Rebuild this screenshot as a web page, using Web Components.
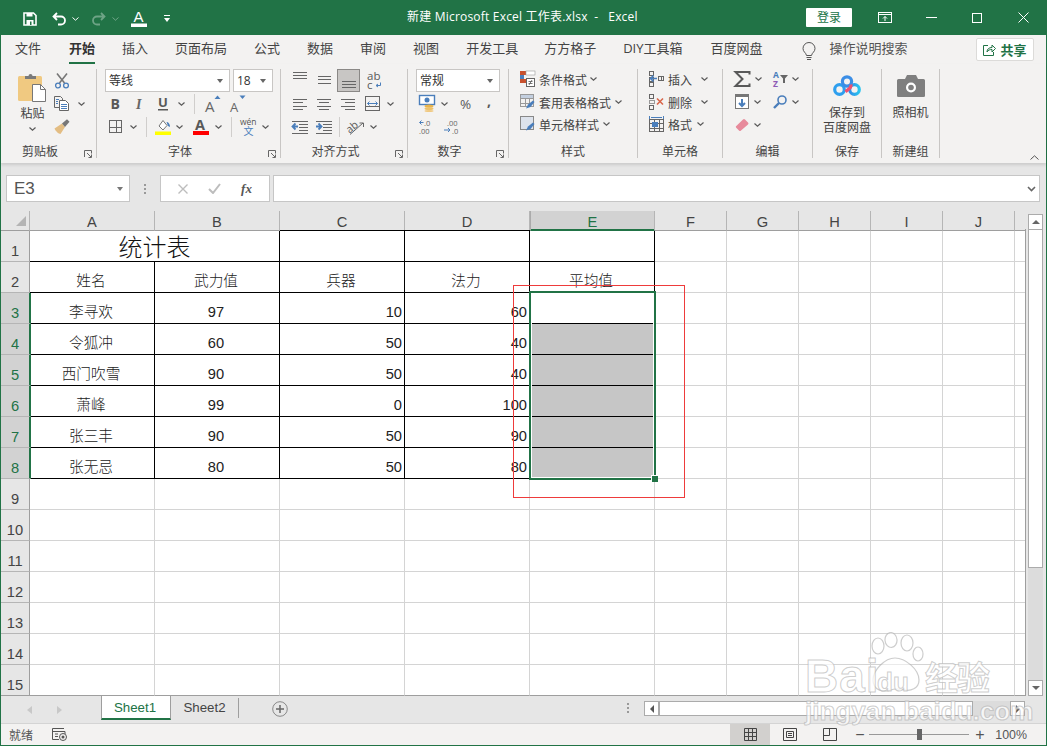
<!DOCTYPE html>
<html lang="zh">
<head>
<meta charset="utf-8">
<title>新建 Microsoft Excel 工作表.xlsx - Excel</title>
<style>
  html, body { margin: 0; padding: 0; }
  body { width: 1047px; height: 746px; overflow: hidden; background: #217346; color: #444;
    font-family: "Open Sans", "Noto Sans CJK SC", sans-serif; font-size: 12px; }
</style>
</head>
<body>
<x-app>
  <x-titlebar></x-titlebar>
  <x-tabs></x-tabs>
  <x-ribbon>
    <rib-group label="剪贴板" width="96" launcher>
      <rib-big icon="paste" width="29" style="margin-left:17px" caret>粘贴</rib-big>
      <div style="margin-left:7px">
        <rib-row><x-ic n="cut" style="margin-left:1px"></x-ic></rib-row>
        <rib-row><x-ic n="copy"></x-ic><x-ic n="caret" style="margin-left:9px"></x-ic></rib-row>
        <rib-row><x-ic n="brush"></x-ic></rib-row>
      </div>
    </rib-group>
    <rib-group label="字体" width="184" launcher>
      <div>
        <rib-row><rib-combo width="125" style="margin-left:8px">等线</rib-combo><rib-combo width="40" style="margin-left:3px">18</rib-combo></rib-row>
        <rib-row>
          <x-ic n="bold" style="margin-left:12px"></x-ic><x-ic n="italic" style="margin-left:12px"></x-ic><x-ic n="under" style="margin-left:12px"></x-ic>
          <x-ic n="caret" style="margin-left:9px"></x-ic><x-ic n="sep" style="margin-left:9px"></x-ic>
          <x-ic n="grow" style="margin-left:10px"></x-ic><x-ic n="shrink" style="margin-left:9px"></x-ic>
        </rib-row>
        <rib-row>
          <x-ic n="borders" style="margin-left:12px"></x-ic><x-ic n="caret" style="margin-left:8px"></x-ic><x-ic n="sep" style="margin-left:9px"></x-ic>
          <x-ic n="fill" style="margin-left:8px"></x-ic><x-ic n="caret" style="margin-left:5px"></x-ic>
          <x-ic n="fontcolor" style="margin-left:10px"></x-ic><x-ic n="caret" style="margin-left:6px"></x-ic><x-ic n="sep" style="margin-left:9px"></x-ic>
          <x-ic n="wen" style="margin-left:8px"></x-ic><x-ic n="caret" style="margin-left:5px"></x-ic>
        </rib-row>
      </div>
    </rib-group>
    <rib-group label="对齐方式" width="127" launcher>
      <div>
        <rib-row>
          <x-ic n="atop" style="margin-left:12px"></x-ic><x-ic n="amid" style="margin-left:10px"></x-ic>
          <x-ic n="abot" active style="margin-left:6px"></x-ic><x-ic n="wrap" style="margin-left:7px"></x-ic>
        </rib-row>
        <rib-row>
          <x-ic n="aleft" style="margin-left:12px"></x-ic><x-ic n="acenter" style="margin-left:10px"></x-ic><x-ic n="aright" style="margin-left:10px"></x-ic>
          <x-ic n="merge" style="margin-left:10px"></x-ic><x-ic n="caret" style="margin-left:7px"></x-ic>
        </rib-row>
        <rib-row>
          <x-ic n="outdent" style="margin-left:11px"></x-ic><x-ic n="indent" style="margin-left:8px"></x-ic><x-ic n="sep" style="margin-left:7px"></x-ic>
          <x-ic n="orient" style="margin-left:7px"></x-ic><x-ic n="caret" style="margin-left:5px"></x-ic>
        </rib-row>
      </div>
    </rib-group>
    <rib-group label="数字" width="101" launcher>
      <div>
        <rib-row><rib-combo width="84" style="margin-left:8px">常规</rib-combo></rib-row>
        <rib-row>
          <x-ic n="money" style="margin-left:11px"></x-ic><x-ic n="caret" style="margin-left:6px"></x-ic>
          <x-ic n="pct" style="margin-left:12px"></x-ic><x-ic n="comma" style="margin-left:14px"></x-ic>
        </rib-row>
        <rib-row><x-ic n="decinc" style="margin-left:11px"></x-ic><x-ic n="decdec" style="margin-left:11px"></x-ic></rib-row>
      </div>
    </rib-group>
    <rib-group label="样式" width="129">
      <div style="--row:22.5px;margin-top:-1px">
        <rib-row><x-ic n="cond" style="margin-left:11px"></x-ic><span style="margin-left:4px">条件格式</span><x-ic n="caret" style="margin-left:3px"></x-ic></rib-row>
        <rib-row><x-ic n="tablefmt" style="margin-left:11px"></x-ic><span style="margin-left:4px">套用表格格式</span><x-ic n="caret" style="margin-left:4px"></x-ic></rib-row>
        <rib-row><x-ic n="cellstyle" style="margin-left:11px"></x-ic><span style="margin-left:4px">单元格样式</span><x-ic n="caret" style="margin-left:4px"></x-ic></rib-row>
      </div>
    </rib-group>
    <rib-group label="单元格" width="85">
      <div style="--row:22.5px;margin-top:-1px">
        <rib-row><x-ic n="insert" style="margin-left:11px"></x-ic><span style="margin-left:4px">插入</span><x-ic n="caret" style="margin-left:9px"></x-ic></rib-row>
        <rib-row><x-ic n="delete" style="margin-left:11px"></x-ic><span style="margin-left:4px">删除</span><x-ic n="caret" style="margin-left:9px"></x-ic></rib-row>
        <rib-row><x-ic n="format" style="margin-left:11px"></x-ic><span style="margin-left:4px">格式</span><x-ic n="caret" style="margin-left:5px"></x-ic></rib-row>
      </div>
    </rib-group>
    <rib-group label="编辑" width="90">
      <div style="margin-top:-2px">
        <rib-row><x-ic n="sum" style="margin-left:11px"></x-ic><x-ic n="caret" style="margin-left:5px"></x-ic><x-ic n="sort" style="margin-left:11px"></x-ic><x-ic n="caret" style="margin-left:4px"></x-ic></rib-row>
        <rib-row><x-ic n="filldown" style="margin-left:12px"></x-ic><x-ic n="caret" style="margin-left:5px"></x-ic><x-ic n="find" style="margin-left:12px"></x-ic><x-ic n="caret" style="margin-left:5px"></x-ic></rib-row>
        <rib-row><x-ic n="eraser" style="margin-left:12px"></x-ic><x-ic n="caret" style="margin-left:5px"></x-ic></rib-row>
      </div>
    </rib-group>
    <rib-group label="保存" width="69">
      <rib-big icon="baidu" width="68">保存到<br>百度网盘</rib-big>
    </rib-group>
    <rib-group label="新建组" width="58">
      <rib-big icon="camera" width="57">照相机</rib-big>
    </rib-group>
  </x-ribbon>
  <x-formula></x-formula>
  <x-main>
    <x-sheet></x-sheet>
    <x-vscroll></x-vscroll>
  </x-main>
  <x-sheetbar></x-sheetbar>
  <x-status></x-status>
  <x-watermark></x-watermark>
</x-app>

<script>
const CJK = '"Noto Sans CJK SC"';
const G = '#666', B = '#4a7ebb', K = '#595959';
const line = (x1, y1, x2, y2, c = G, w = 1) => `<path d="M${x1} ${y1}L${x2} ${y2}" stroke="${c}" stroke-width="${w}" fill="none"/>`;
const hlines = (rows, c = G) => rows.map(r => line(r[0], r[2] + .5, r[1], r[2] + .5, c)).join('');
const txt = (x, y, s, size, c = G, extra = '') => `<text x="${x}" y="${y}" font-size="${size}" fill="${c}" font-family="Liberation Sans,${CJK},sans-serif" ${extra}>${s}</text>`;
const grid = (x, y, w, h, cols, rows, c = G) => {
  let o = `<rect x="${x + .5}" y="${y + .5}" width="${w - 1}" height="${h - 1}" fill="none" stroke="${c}"/>`;
  for (let i = 1; i < cols; i++) { const px = Math.round(x + i * w / cols) + .5; o += line(px, y, px, y + h, c); }
  for (let i = 1; i < rows; i++) { const py = Math.round(y + i * h / rows) + .5; o += line(x, py, x + w, py, c); }
  return o;
};
const ICONS = {
  caret: [7, 4, `<path d="M.5 .5L3.5 3.2L6.5 .5" fill="none" stroke="#595959" stroke-width="1.2"/>`],
  sep: [1, 20, `<rect width="1" height="20" fill="#d0cecc"/>`],
  paste: [29, 29, `<rect x="0" y="3" width="24" height="25" rx="1.5" fill="#f0c981"/><path d="M7 5V3h3.5a2 2 0 0 1 4 0H18v3H7z" fill="#7a7a7a"/><path d="M14.5 11.5h8l5 5v12h-13z" fill="#fff" stroke="#777"/><path d="M22.5 11.5v5h5" fill="none" stroke="#777"/>`],
  cut: [14, 16, `<path d="M2 .5L9.5 10M12 .5L4.5 10" stroke="#777" stroke-width="1.6" fill="none"/><circle cx="3" cy="12.5" r="2.4" fill="none" stroke="${B}" stroke-width="1.3"/><circle cx="11" cy="12.5" r="2.4" fill="none" stroke="${B}" stroke-width="1.3"/>`],
  copy: [15, 15, `<path d="M.5 .5h6l2 2v9H.5z" fill="#f3f2f1" stroke="#666"/><path d="M5.5 4.5h6l3 3v7h-9z" fill="#fff" stroke="#666"/>${hlines([[2, 5, 3], [2, 4, 5], [2, 4, 7]], B)}${hlines([[7, 13, 8], [7, 13, 10], [7, 13, 12]], B)}`],
  brush: [16, 15, `<path d="M.5 9.5L8 4.5l3 3.5-4.5 7c-2 0-5-3-6-5.5z" fill="#e3bd83"/><path d="M8 4.5l5-4.3 2.5 2.5L11 8z" fill="#777"/>`],
  bold: [12, 14, txt(1.5, 12, 'B', 14, K, 'font-weight="700"')],
  italic: [12, 14, `<text x="3" y="12" font-size="14" fill="#666" font-style="italic" font-family="Liberation Serif,serif" font-weight="700">I</text>`],
  under: [12, 16, txt(1, 11, 'U', 13, K, 'font-weight="700"') + `<rect x="1" y="13" width="10" height="1.5" fill="${K}"/>`],
  grow: [16, 18, txt(0, 17, 'A', 15, G) + `<path d="M9.5 4L12.5 .5L15.5 4z" fill="${B}"/>`],
  shrink: [16, 18, txt(0, 17, 'A', 13, G) + `<path d="M9.5 .5L12.5 4L15.5 .5z" fill="${B}"/>`],
  borders: [13, 13, grid(0, 0, 13, 13, 2, 2, '#666')],
  fill: [16, 16, `<path d="M4 7L8 1.5L12 6.5L8 11z" fill="#fff" stroke="#777"/><path d="M11.5 3c2 0 3.5 2 3.5 5l-2-1z" fill="${B}"/><rect y="12.5" width="16" height="3.5" fill="#ffff00"/>`],
  fontcolor: [16, 17, txt(2, 12, 'A', 14.5, K, 'font-weight="700"') + `<rect y="13" width="16" height="4" fill="#ff0000"/>`],
  wen: [17, 17, txt(0, 7, 'wén', 8.5, '#555') + `<text x="3.500" y="17" font-size="10" fill="${B}" font-family="${CJK},sans-serif">文</text>`],
  atop: [14, 14, hlines([[0, 14, -2], [0, 14, 1], [0, 14, 4]])],
  amid: [14, 14, hlines([[1, 14, 2], [1, 14, 5], [1, 14, 9]])],
  abot: [14, 14, hlines([[0, 14, 7], [0, 14, 10], [0, 14, 13]])],
  wrap: [15, 17, txt(0, 8, 'ab', 11.5, K) + txt(0, 17, 'c', 11.5, K) + `<path d="M13.5 10.5v3h-4M11 12l-2 1.5 2 1.5" fill="none" stroke="${B}"/>`],
  aleft: [14, 14, hlines([[0, 14, 2], [0, 10, 5], [0, 14, 9], [0, 10, 12]])],
  acenter: [14, 14, hlines([[0, 14, 2], [2, 12, 5], [0, 14, 9], [2, 12, 12]])],
  aright: [14, 14, hlines([[0, 14, 2], [4, 14, 5], [0, 14, 9], [4, 14, 12]])],
  merge: [15, 15, grid(0, 0, 15, 15, 1, 3) + `<rect x="1" y="5" width="13" height="5" fill="#f3f2f1"/><path d="M2.5 7.5h10M4.5 5.5l-2 2 2 2M10.5 5.5l2 2-2 2" fill="none" stroke="${B}"/>`],
  outdent: [16, 14, hlines([[0, 16, 1], [7, 16, 4], [7, 16, 7], [7, 16, 10], [0, 16, 13]]) + `<path d="M6 6.5H1M3.5 3.5l-3 3 3 3" fill="none" stroke="${B}" stroke-width="1.8"/>`],
  indent: [16, 14, hlines([[0, 16, 1], [7, 16, 4], [7, 16, 7], [7, 16, 10], [0, 16, 13]]) + `<path d="M0 6.5h5M2.5 3.5l3 3-3 3" fill="none" stroke="${B}" stroke-width="1.8"/>`],
  orient: [18, 16, txt(0, 12, 'ab', 10.5, K, 'transform="rotate(-40 5 10)"') + `<path d="M3 15.5L16 4M12.5 4H16.5V8" fill="none" stroke="#666"/>`],
  money: [16, 17, `<rect x=".5" y=".5" width="15" height="9" fill="#fff" stroke="${B}" stroke-width="1.4"/><circle cx="8" cy="5" r="2.5" fill="${B}"/><ellipse cx="10" cy="11" rx="4.5" ry="1.6" fill="#e9b44c"/><ellipse cx="10" cy="13.5" rx="4.5" ry="1.6" fill="#eec26a"/><ellipse cx="10" cy="16" rx="4.5" ry="1" fill="#f0c981"/>`],
  pct: [13, 14, txt(0, 12, '%', 13.5, K)],
  comma: [6, 14, txt(0, 9, ',', 14, K, 'font-weight="700"')],
  decinc: [14, 15, txt(5, 7, '.0', 7.5, '#666') + txt(0, 14.5, '.00', 7.5, '#666') + `<path d="M4.5 3.5H.8M2.5 1.5l-2 2 2 2" fill="none" stroke="${B}"/>`],
  decdec: [14, 15, txt(3, 6.5, '.00', 7.5, '#666') + txt(8, 14.5, '.0', 7.5, '#666') + `<path d="M0 11h6M4 9l2 2-2 2" fill="none" stroke="${B}"/>`],
  cond: [15, 16, `<rect width="6" height="4" fill="#c8512e"/><rect x="6" width="9" height="4" fill="#fff" stroke="#999" stroke-width=".6"/><rect y="4" width="4" height="8" fill="#4a7ebb"/><rect y="8" width="6" height="4" fill="#c8512e"/><rect x="6.5" y="7.5" width="8" height="8" fill="#fff" stroke="#666"/><path d="M8.5 10.5h4M8.5 12.5h4M12 9l-3 5" stroke="#555" fill="none" stroke-width=".8"/>`],
  tablefmt: [15, 16, grid(0, 0, 14, 13, 3, 3, '#999') + `<rect x="1" y="1" width="12" height="3" fill="#c3cfdf"/><path d="M6 14.5l2-4 5-4 1.5 1.5-4 5z" fill="${B}"/>`],
  cellstyle: [15, 16, `<rect x=".5" y=".5" width="13" height="13" fill="#dde3ec" stroke="#888"/><path d="M6 14.5l2-4 5-4 1.5 1.5-4 5z" fill="${B}"/>`],
  insert: [15, 16, grid(0, 0, 5, 5, 1, 1, '#666') + grid(0, 6, 5, 5, 1, 1, '#666') + grid(0, 11, 5, 5, 1, 1, '#666') + grid(9, 5, 6, 5, 2, 1, '#666') + `<path d="M8 7.5H2M4.5 4.5l-3 3 3 3" fill="none" stroke="${B}" stroke-width="1.6"/>`],
  delete: [15, 16, grid(0, 0, 5, 5, 1, 1, '#666') + grid(0, 11, 5, 5, 1, 1, '#666') + grid(0, 6, 6, 4, 1, 1, '#999') + `<path d="M8 4.5l6 6M14 4.5l-6 6" stroke="#d9664a" stroke-width="1.6" fill="none"/>`],
  format: [15, 16, `<path d="M.5 0v3M14.5 0v3" stroke="${B}"/><path d="M2 1.5h11" stroke="${B}"/>` + grid(0, 3, 15, 13, 3, 3, '#666') + `<rect x="3" y="6" width="6" height="5" fill="${B}"/>`],
  sum: [16, 16, `<path d="M15.5 3.500V1H1.500L8.500 8L1.500 15H15.500V12.500" fill="none" stroke="${K}" stroke-width="2"/>`],
  sort: [15, 17, txt(0, 8, 'A', 8.5, B, 'font-weight="700"') + txt(0, 16.5, 'Z', 8.5, '#8e5bb5', 'font-weight="700"') + `<path d="M7 5h8l-3 3.5V13h-2V8.5z" fill="#666"/>`],
  filldown: [14, 15, `<rect x=".5" y=".5" width="13" height="14" fill="#fff" stroke="#777"/><rect width="14" height="3" fill="#777"/><path d="M7 5v7M4 9l3 3 3-3" fill="none" stroke="${B}" stroke-width="2"/>`],
  find: [14, 14, `<circle cx="9" cy="5" r="4" fill="none" stroke="${B}" stroke-width="1.6"/><path d="M6 8L1 13" stroke="${B}" stroke-width="2.4"/>`],
  eraser: [14, 13, `<path d="M.8 8.5L8 1.5q1-1 2 0l3 3q1 1 0 2L6 12.5q-1 1-2 0L1 9.5z" fill="#e78a9b"/>`],
  baidu: [28, 22, `<defs><linearGradient id="bd" x1="0" x2="1"><stop offset="0" stop-color="#2f8ee8"/><stop offset="1" stop-color="#29c4ef"/></linearGradient></defs><circle cx="6.5" cy="14.5" r="4.8" fill="none" stroke="#2e9fee" stroke-width="3.2"/><circle cx="21.5" cy="14.5" r="4.8" fill="none" stroke="url(#bd)" stroke-width="3.2"/><circle cx="14" cy="6.5" r="4.6" fill="none" stroke="#3b8ee6" stroke-width="3.2"/><path d="M18 9.5a5 5 0 0 1-1 3.5l-4.5 3.8" fill="none" stroke="#f0516f" stroke-width="3.2"/>`],
  camera: [28, 22, `<path d="M0 5.5q0-1.5 1.5-1.5H8l2-4h9l2 4h5.5Q28 4 28 5.5V21q0 1-1.5 1h-25Q0 22 0 21z" fill="#7f7f7f"/><circle cx="14" cy="12.5" r="5" fill="#fff"/><circle cx="14" cy="12.5" r="2.8" fill="#7f7f7f"/>`],
  launcher: [8, 8, `<path d="M.5 7V.5H7.5V3.5M4.5 7.5H7.5V4.5M3 3L7 7" fill="none" stroke="#666"/>`],
};
const frag = (tag, html) => {
  return class extends HTMLElement {
    constructor() { super(); this.attachShadow({ mode: 'open' }).innerHTML = html; }
  };
};

class XIc extends HTMLElement {
  connectedCallback() {
    const [w, h, inner] = ICONS[this.getAttribute('n')];
    const active = this.hasAttribute('active');
    this.attachShadow({ mode: 'open' }).innerHTML = `<style>
      :host{display:inline-flex;align-items:center;justify-content:center;flex:none;
        ${active ? 'width:23px;height:23px;box-sizing:border-box;background:#c8c6c4;border:1px solid #8a8886;margin-right:0;' : ''}}
      svg{display:block;overflow:visible}
    </style><svg width="${w}" height="${h}" viewBox="0 0 ${w} ${h}">${inner}</svg>`;
  }
}
customElements.define('x-ic', XIc);

customElements.define('x-app', frag('x-app', `<style>
  :host{display:flex;flex-direction:column;position:relative;box-sizing:border-box;width:1047px;height:746px;padding:0 1px 1px;overflow:hidden}
</style><slot></slot>`));

customElements.define('x-titlebar', frag('x-titlebar', `<style>
  :host{display:flex;align-items:center;height:35px;margin:0 -1px;background:#217346;color:#fff;position:relative;flex:none}
  svg{display:block;flex:none;overflow:visible}
  .title{position:absolute;left:407px;top:8px;white-space:pre;font-size:12px;line-height:18px;letter-spacing:.2px;color:#fff}
  .qat{display:flex;align-items:center;padding:2px 0 0 23px}
  .right{margin-left:auto;display:flex;align-items:center}
  .login{width:46px;height:19px;background:#fff;color:#217346;font-size:12px;line-height:19px;text-align:center;border-radius:1px;margin-right:26px}
</style>
<div class="qat">
  <svg width="14" height="14" viewBox="0 0 14 14"><path d="M1 1h9.5L13 3.5V13H1z" fill="none" stroke="#fff" stroke-width="1.6"/><rect x="3.5" y="1" width="6" height="3.5" fill="#fff"/><rect x="3.5" y="8" width="7" height="5" fill="#fff"/><rect x="7" y="9.5" width="1.5" height="3.5" fill="#217346"/></svg>
  <svg style="margin-left:15px" width="14" height="14" viewBox="0 0 14 14"><path d="M5 1L1.5 4.5L5 8M2 4.5H9a4 4 0 0 1 0 8H6" fill="none" stroke="#fff" stroke-width="1.8"/></svg>
  <svg style="margin-left:6px" width="7" height="4" viewBox="0 0 7 4"><path d="M.5 .5L3.5 3.2L6.5 .5" fill="none" stroke="#fff"/></svg>
  <svg style="margin-left:13px;opacity:.35" width="14" height="14" viewBox="0 0 14 14"><path d="M9 1L12.5 4.5L9 8M12 4.5H5a4 4 0 0 0 0 8H8" fill="none" stroke="#fff" stroke-width="1.8"/></svg>
  <svg style="margin-left:6px;opacity:.35" width="7" height="4" viewBox="0 0 7 4"><path d="M.5 .5L3.5 3.2L6.5 .5" fill="none" stroke="#fff"/></svg>
  <svg style="margin-left:12px" width="16" height="17" viewBox="0 0 16 17"><text x="2.5" y="12" font-size="15" fill="#fff" font-family="Liberation Sans,sans-serif">A</text><rect y="13.5" width="16" height="3.5" fill="#fff"/></svg>
  <svg style="margin-left:17px" width="6" height="8" viewBox="0 0 6 8"><path d="M0 .5h6" stroke="#fff"/><path d="M0 3h6L3 7z" fill="#fff"/></svg>
</div>
<div class="title">新建 Microsoft Excel 工作表.xlsx  -   Excel</div>
<div class="right">
  <div class="login">登录</div>
  <svg width="14" height="11" viewBox="0 0 14 11"><rect x=".5" y=".5" width="13" height="10" fill="none" stroke="#fff"/><path d="M1 2.5h12" stroke="#fff"/><path d="M7 9V4.5M5 6.5l2-2 2 2" fill="none" stroke="#fff"/></svg>
  <svg style="margin-left:34px" width="11" height="1" viewBox="0 0 11 1"><rect width="11" height="1" fill="#fff"/></svg>
  <svg style="margin-left:35px" width="10" height="10" viewBox="0 0 10 10"><rect x=".5" y=".5" width="9" height="9" fill="none" stroke="#fff"/></svg>
  <svg style="margin-left:36px;margin-right:18px" width="11" height="11" viewBox="0 0 11 11"><path d="M.5 .5l10 10M10.5 .5l-10 10" stroke="#fff" fill="none"/></svg>
</div>`));

customElements.define('x-tabs', frag('x-tabs', `<style>
  :host{display:flex;align-items:flex-start;height:29px;background:#f3f2f1;color:#444;font-size:13px;flex:none;box-sizing:border-box;padding-left:14px}
  span{display:block;line-height:27px;margin-right:27px;white-space:nowrap;height:27px}
  .on{font-weight:700;color:#333;border-bottom:2px solid #217346;margin-right:27px;height:25px;padding-top:2px;line-height:23px}
  .bulb{margin:7px 0 0 12px;flex:none}
  .help{margin-left:14px;margin-right:0;color:#555}
  .share{margin-left:auto;margin-right:12px;margin-top:3px;width:58px;height:23px;box-sizing:border-box;background:#fff;border:1px solid #dcdbd9;border-radius:2px;display:flex;align-items:center;justify-content:center;gap:4px;color:#217346;font-weight:700;font-size:13px}
  b{font-weight:700}
</style>
<span>文件</span><span class="on" style="margin-left:1px">开始</span><span>插入</span><span>页面布局</span><span>公式</span><span>数据</span><span>审阅</span><span>视图</span><span style="margin-right:26px">开发工具</span><span>方方格子</span><span>DIY工具箱</span><span style="margin:0 0 0 1px">百度网盘</span>
<svg class="bulb" style="margin-left:39px" width="14" height="19" viewBox="0 0 14 19"><path d="M4.5 13.5C4 10.5 1 10 1 6.5a6 6 0 0 1 12 0c0 3.500-3 4-3.500 7z" fill="none" stroke="#555"/><path d="M4.500 15.500h5M5 17.500h4" stroke="#555"/></svg>
<span class="help">操作说明搜索</span>
<div class="share"><svg width="13" height="13" viewBox="0 0 13 13"><path d="M5 2.500H.5v10h10V9" fill="none" stroke="#217346"/><path d="M4 9c0-3 2-4.500 5-4.500V2l3.500 3.500L9 9V6.500C7 6.500 5 7 4 9z" fill="none" stroke="#217346"/></svg><b>共享</b></div>`));

customElements.define('x-ribbon', frag('x-ribbon', `<style>
  :host{display:flex;height:99px;padding-top:5px;box-sizing:border-box;background:#f3f2f1;flex:none;position:relative;box-shadow:0 2px 3px rgba(0,0,0,.12);z-index:2}
  svg{position:absolute;right:7px;top:91px}
</style><slot></slot><svg width="9" height="5" viewBox="0 0 9 5"><path d="M.5 4.500L4.500 .8L8.500 4.500" fill="none" stroke="#555"/></svg>`));

class RibGroup extends HTMLElement {
  connectedCallback() {
    const launcher = this.hasAttribute('launcher');
    this.attachShadow({ mode: 'open' }).innerHTML = `<style>
      :host{display:flex;flex-direction:column;box-sizing:border-box;width:${this.getAttribute('width')}px;height:89px;border-right:1px solid #c8c6c4;position:relative;flex:none;color:#444;font-size:12px}
      .body{display:flex;height:69px;flex:none}
      .label{margin-top:7px;height:14px;line-height:14px;text-align:center;padding-right:${launcher ? 17 : 0}px;white-space:nowrap;color:#444;flex:none}
      x-ic{position:absolute;right:4px;bottom:0}
    </style><div class="body"><slot></slot></div><div class="label">${this.getAttribute('label')}</div>${launcher ? '<x-ic n="launcher"></x-ic>' : ''}`;
  }
}
customElements.define('rib-group', RibGroup);

customElements.define('rib-row', frag('rib-row', `<style>
  :host{display:flex;align-items:center;height:var(--row,23px);white-space:nowrap}
  ::slotted(span){padding-top:2px}
</style><slot></slot>`));

class RibCombo extends HTMLElement {
  connectedCallback() {
    this.attachShadow({ mode: 'open' }).innerHTML = `<style>
      :host{display:flex;align-items:center;justify-content:space-between;box-sizing:border-box;width:${this.getAttribute('width')}px;height:23px;background:#fff;border:1px solid #c8c6c4;padding:0 6px 0 3px;font-size:12px;color:#333;flex:none}
      span{padding-bottom:1px}
      i{width:0;height:0;border:3.500px solid transparent;border-top:4px solid #666;border-bottom:0}
    </style><span><slot></slot></span><i></i>`;
  }
}
customElements.define('rib-combo', RibCombo);

class RibBig extends HTMLElement {
  connectedCallback() {
    this.attachShadow({ mode: 'open' }).innerHTML = `<style>
      :host{display:flex;flex-direction:column;align-items:center;width:${this.getAttribute('width')}px;flex:none;color:#444}
      .ic{margin-top:${this.getAttribute('icon') === 'paste' ? 4 : 6}px;height:${this.getAttribute('icon') === 'paste' ? 29 : 22}px}
      .t{margin-top:${this.getAttribute('icon') === 'paste' ? 4 : 8}px;line-height:15px;text-align:center;white-space:nowrap}
      .c{margin-top:6px}
    </style><x-ic class="ic" n="${this.getAttribute('icon')}"></x-ic><div class="t"><slot></slot></div>${this.hasAttribute('caret') ? '<x-ic class="c" n="caret"></x-ic>' : ''}`;
  }
}
customElements.define('rib-big', RibBig);

customElements.define('x-formula', frag('x-formula', `<style>
  :host{display:flex;align-items:center;height:48px;box-sizing:border-box;padding:12px 6px 9px 5px;background:#e6e6e6;flex:none}
  .box{height:27px;box-sizing:border-box;background:#fff;border:1px solid #c6c6c6;display:flex;align-items:center;flex:none}
  .name{width:124px;font:17px "Liberation Sans",sans-serif;color:#555;padding:0 6px 0 7px;justify-content:space-between}
  .name i,.end i{width:0;height:0;border:3.500px solid transparent;border-top:4px solid #777;border-bottom:0}
  .dots{width:2px;height:10px;margin:0 14px 0 14px;background:repeating-linear-gradient(#999 0 2px,transparent 2px 4px);flex:none}
  .fx{width:110px;justify-content:space-around;padding:0 7px}
  .fx span{font:italic 700 13px "Liberation Serif",serif;color:#555}
  .end{flex:1;margin-left:3px;justify-content:flex-end;padding-right:3px}
  svg{display:block}
</style>
<div class="box name">E3<i></i></div><div class="dots"></div>
<div class="box fx">
  <svg width="10" height="10" viewBox="0 0 10 10"><path d="M.5 .5l9 9M9.500 .5l-9 9" stroke="#bdbdbd" stroke-width="1.400" fill="none"/></svg>
  <svg width="13" height="11" viewBox="0 0 13 11"><path d="M1 6l4 4 7-9" stroke="#bdbdbd" stroke-width="2" fill="none"/></svg>
  <span>fx</span>
</div>
<div class="box end"><svg width="9" height="6" viewBox="0 0 9 6"><path d="M1 1l3.500 3.500L8 1" stroke="#666" stroke-width="1.600" fill="none"/></svg></div>`));

customElements.define('x-main', frag('x-main', `<style>
  :host{display:flex;height:485px;flex:none}
</style><slot></slot>`));

class XSheet extends HTMLElement {
  constructor() {
    super();
    const data = [
      [['统计表', 'title'], null, '', '', ''],
      ['姓名', '武力值', '兵器', '法力', '平均值'],
      ['李寻欢', '97', 10, 60, ''],
      ['令狐冲', '60', 50, 40, ''],
      ['西门吹雪', '90', 50, 40, ''],
      ['萧峰', '99', 0, 100, ''],
      ['张三丰', '90', 50, 90, ''],
      ['张无忌', '80', 50, 80, ''],
    ];
    const widths = [125, 125, 125, 125, 125, 72, 72, 72, 72, 72, 10];
    const letters = 'ABCDEFGHIJ ';
    let html = `<div class="corner"><svg width="10" height="10" viewBox="0 0 10 10"><path d="M10 0V10H0z" fill="#b4b4b4"/></svg></div>`;
    letters.split('').forEach((l, i) => {
      html += `<div class="ch${l === 'E' ? ' csel' : ''}${l === ' ' ? ' last' : ''}">${l}</div>`;
    });
    for (let r = 1; r <= 15; r++) {
      const sel = r >= 3 && r <= 8;
      html += `<div class="rh${sel ? ' rsel' : ''}${r === 15 ? ' rlast' : ''}"><span>${r}</span></div>`;
      for (let c = 0; c < widths.length; c++) {
        const row = data[r - 1];
        if (row && c < 5) {
          const v = row[c];
          if (v === null) continue;
          if (Array.isArray(v)) {
            html += `<div class="c tb title" style="grid-column:span 2">${v[0]}</div>`;
          } else {
            const right = typeof v === 'number';
            const fill = c === 4 && r > 3 ? ' fill' : '';
            const top = r === 1 && (c === 2 || c === 3) ? ' topb' : '';
            html += `<div class="c tb${right ? ' num' : ''}${fill}${top}">${v}</div>`;
          }
        } else {
          html += `<div class="c${r === 15 ? ' clast' : ''}${c === 10 ? ' rb' : ''}"></div>`;
        }
      }
    }
    this.attachShadow({ mode: 'open' }).innerHTML = `<style>
      :host{display:block;position:relative;width:1024px;flex:none;background:#fff;font:300 14.67px "Liberation Sans",${CJK},sans-serif;color:#222}
      .grid{display:grid;grid-template-columns:29px ${widths.join('px ')}px;grid-template-rows:20px repeat(15,31px);height:485px;box-sizing:border-box}
      .corner{background:#e6e6e6;border-right:1px solid #b5b5b5;border-bottom:1px solid #9e9e9e;box-sizing:border-box;display:flex;align-items:flex-end;justify-content:flex-end;padding:0 3px 4px 0}
      .ch{background:#e6e6e6;border-right:1px solid #b5b5b5;border-bottom:1px solid #9e9e9e;box-sizing:border-box;text-align:center;line-height:22px;color:#444}
      .ch.last{border-right:0}
      .csel{background:#d2d2d2;color:#217346;box-shadow:inset 0 -1px 0 #217346;border-bottom-color:#217346;border-left:1px solid #ababab}
      .rh{background:#e6e6e6;border-right:1px solid #9e9e9e;border-bottom:1px solid #b5b5b5;box-sizing:border-box;text-align:center;color:#444;display:flex;align-items:flex-end;justify-content:center;padding-bottom:2px}
      .rsel{background:#d2d2d2;color:#217346;border-right:2px solid #217346;width:30px;position:relative}
      .c{border-right:1px solid #d4d4d4;border-bottom:1px solid #d4d4d4;box-sizing:border-box;background:#fff}
      .clast{border-bottom-color:#9e9e9e}
      .rb{border-right:0}
      .rlast{border-bottom-color:#9e9e9e}
      .tb{border-right-color:#000;border-bottom-color:#000;display:flex;align-items:flex-end;justify-content:center;padding:0 2px 1px 0;line-height:19px}
      .num{justify-content:flex-end}
      .title{font-size:24px;line-height:26px;padding:0;color:#111}
      .fill{background:#c6c6c6}
      .topb{box-shadow:0 -1px 0 #000}
      .sel{position:absolute;left:528px;top:80px;width:127px;height:189px;box-sizing:border-box;border:2px solid #217346;outline:1px solid #fff;outline-offset:-3px}
      .handle{position:absolute;left:650px;top:264px;width:7px;height:7px;box-sizing:border-box;background:#217346;border:1px solid #fff;border-width:1px 0 0 1px}
    </style><div class="grid">${html}</div><div class="sel"></div><div class="handle"></div>`;
  }
}
customElements.define('x-sheet', XSheet);

customElements.define('x-vscroll', frag('x-vscroll', `<style>
  :host{display:flex;flex-direction:column;flex:1;background:#e6e6e6;box-sizing:border-box;padding:3px 3px 0 2px;border-left:1px solid;border-image:linear-gradient(transparent 19px,#9e9e9e 19px) 1}
  .btn{height:16px;background:#fff;border:1px solid #ababab;box-sizing:border-box;display:flex;align-items:center;justify-content:center;flex:none}
  .thumb{height:338px;background:#fff;border:solid #ababab;border-width:0 1px 1px;box-sizing:border-box;flex:none}
  .track{flex:1;background:#dcdcdc}
  i{width:0;height:0;border:4px solid transparent}
  .up{border-bottom:4px solid #666;border-top:0}
  .dn{border-top:4px solid #666;border-bottom:0}
</style>
<div class="btn"><i class="up"></i></div><div class="thumb"></div><div class="track"></div><div class="btn"><i class="dn"></i></div>`));

customElements.define('x-sheetbar', frag('x-sheetbar', `<style>
  :host{display:flex;height:28px;background:#e6e6e6;flex:none;box-sizing:border-box;position:relative;border-bottom:1px solid #d4d4d4;align-items:flex-start;color:#444;font:13.300px "Liberation Sans",sans-serif}
  .nav{display:flex;width:100px;padding:0 0 0 26px;box-sizing:border-box;gap:25px;height:27px;align-items:center;flex:none}
  .nav i{width:0;height:0;border:4px solid transparent;border-left:0;border-right:5px solid #c8c8c8}
  .nav i+i{border-right:0;border-left:5px solid #c8c8c8}
  .tab{width:70px;height:24px;text-align:center;line-height:22px;flex:none;box-sizing:border-box}
  .on{height:24px;background:#fff;color:#217346;border:solid #9e9e9e;border-width:0 1px;border-bottom:2px solid #217346;height:24px;width:70px;line-height:23px;padding-right:2px}
  .tab2{border-right:1px solid #9e9e9e;height:20px;margin-top:2px;line-height:19px;width:68px}
  .plus{margin:10px 0 0 33px;display:block;margin-top:5px;flex:none}
  .dots{margin-left:339px;margin-top:7px;width:2px;height:10px;background:repeating-linear-gradient(#999 0 2px,transparent 2px 4px);flex:none}
  .hs{margin-left:15px;margin-top:5px;display:flex;height:15px;width:381px;flex:none}
  .b{width:15px;height:15px;box-sizing:border-box;background:#fff;border:1px solid #ababab;display:flex;align-items:center;justify-content:center;flex:none}
  .b i{width:0;height:0;border:4px solid transparent;border-left:0;border-right:4px solid #555}
  .b.r i{border-right:0;border-left:4px solid #555}
  .th{width:314px;background:#fff;border:solid #ababab;border-width:1px 1px 1px 1px;box-sizing:border-box;flex:none}
  .tr{flex:1;background:#dcdcdc}
</style>
<div class="nav"><i></i><i></i></div>
<div class="tab on">Sheet1</div><div class="tab tab2">Sheet2</div>
<svg class="plus" width="16" height="16" viewBox="0 0 16 16"><circle cx="8" cy="8" r="7.300" fill="none" stroke="#888"/><path d="M8 4v8M4 8h8" stroke="#666" stroke-width="1.500"/></svg>
<div class="dots"></div>
<div class="hs"><div class="b"><i></i></div><div class="th"></div><div class="tr"></div><div class="b r"><i></i></div></div>`));

customElements.define('x-status', frag('x-status', `<style>
  :host{display:flex;height:21px;background:#f3f2f1;flex:none;align-items:center;color:#555;font-size:12px;padding-left:8px;box-sizing:border-box}
  svg{display:block;flex:none}
  .mac{margin-left:19px}
  .views{margin-left:auto;display:flex;align-items:center;height:21px}
  .nv{width:40px;height:21px;background:#d2d0ce;display:flex;align-items:center;justify-content:center}
  .slider{width:100px;height:1px;background:#999;margin:0 6px;position:relative;flex:none}
  .slider i{position:absolute;left:48px;top:-5px;width:5px;height:11px;background:#666}
  .pct{margin:0 19px 0 12px;font:12.400px "Liberation Sans",sans-serif;color:#555}
  .pm{color:#555;font:16px "Liberation Sans",sans-serif;width:8px;text-align:center}
</style>
<span>就绪</span>
<svg class="mac" width="15" height="13" viewBox="0 0 15 13"><path d="M12 .5H.5v11H7" fill="none" stroke="#555"/><path d="M.5 3.500H13V6" fill="none" stroke="#555"/><path d="M3 6h3M3 8.500h3" stroke="#555"/><circle cx="11" cy="9" r="3.500" fill="none" stroke="#555"/><circle cx="11" cy="9" r="1.500" fill="#555"/></svg>
<div class="views">
  <div class="nv"><svg width="13" height="13" viewBox="0 0 13 13"><path d="M.5 .5h12v12H.5zM4.500 .5v12M8.500 .5v12M.5 4.500h12M.5 8.500h12" fill="none" stroke="#444"/></svg></div>
  <svg style="margin-left:13px" width="14" height="13" viewBox="0 0 14 13"><path d="M.5 .5h13v12H.5z" fill="none" stroke="#444"/><path d="M3.500 3.500h7v6h-7zM5 5.500h4M5 7.500h4" fill="none" stroke="#444"/></svg>
  <svg style="margin-left:26px" width="14" height="13" viewBox="0 0 14 13"><path d="M.5 .5h13v12H.5zM.5 7.500h6M6.500 .5v7" fill="none" stroke="#444"/></svg>
  <span class="pm" style="margin-left:18px">−</span>
  <div class="slider"><i></i></div>
  <span class="pm">+</span>
  <span class="pct">100%</span>
</div>`));

customElements.define('x-watermark', frag('x-watermark', `<style>
  :host{position:absolute;left:0;top:0;width:1047px;height:746px;pointer-events:none;display:block;z-index:5}
  .red{position:absolute;left:513px;top:285px;width:172px;height:213px;box-sizing:border-box;border:1px solid #ee3b3b}
  .wm{position:absolute;left:803px;top:632px;width:190px;height:92px;color:rgba(255,255,255,.72);-webkit-text-stroke:1px rgba(175,175,175,.62)}
  .bai{position:absolute;left:2px;top:19px;font:700 46px/50px "Liberation Sans",sans-serif;letter-spacing:1px}
  .du{position:absolute;left:74px;top:36px;font:700 26px/28px "Liberation Sans",sans-serif}
  .jy{position:absolute;left:122px;top:24px;font:700 33px/40px ${CJK},sans-serif;letter-spacing:-1px}
  .url{position:absolute;left:2px;top:64px;font:700 26px/30px "Liberation Sans",sans-serif}
  svg{position:absolute;left:62px;top:0}
</style>
<div class="red"></div>
<div class="wm">
  <svg width="62" height="62" viewBox="0 0 62 62" fill="rgba(255,255,255,.5)" stroke="rgba(175,175,175,.62)" stroke-width="1.200"><ellipse cx="13" cy="14" rx="6" ry="8"/><ellipse cx="26" cy="8" rx="6" ry="7.500" transform="rotate(-5 26 8)"/><ellipse cx="42" cy="11" rx="6" ry="8"/><ellipse cx="53" cy="22" rx="5" ry="7"/><path d="M8 48c0-10 12-22 22-22s24 11 24 22c0 9-9 11-14 10-5-1-10-2-14 0-8 3-18 0-18-10z"/></svg>
  <div class="bai">Bai</div><div class="du">du</div><div class="jy">经验</div><div class="url">jingyan.baidu.com</div>
</div>`));
</script>
</body>
</html>
